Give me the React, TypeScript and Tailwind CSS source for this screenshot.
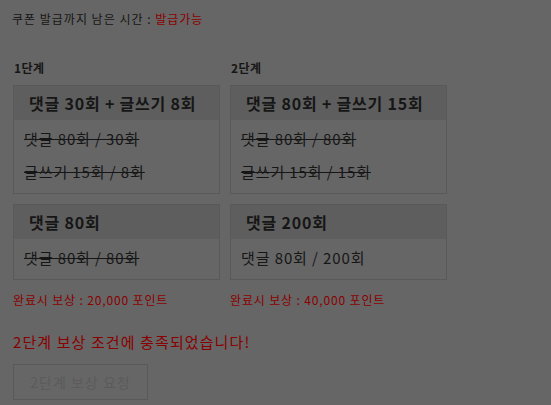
const font = { fontFamily: '"Noto Sans CJK KR", "Noto Sans", sans-serif' };

type Stage = {
  title: string;
  lines: { text: string; done: boolean }[];
};

const stage1: Stage[] = [
  {
    title: '댓글 30회 + 글쓰기 8회',
    lines: [
      { text: '댓글 80회 / 30회', done: true },
      { text: '글쓰기 15회 / 8회', done: true },
    ],
  },
  {
    title: '댓글 80회',
    lines: [{ text: '댓글 80회 / 80회', done: true }],
  },
];

const stage2: Stage[] = [
  {
    title: '댓글 80회 + 글쓰기 15회',
    lines: [
      { text: '댓글 80회 / 80회', done: true },
      { text: '글쓰기 15회 / 15회', done: true },
    ],
  },
  {
    title: '댓글 200회',
    lines: [{ text: '댓글 80회 / 200회', done: false }],
  },
];

function MissionBox({ stage }: { stage: Stage }) {
  return (
    <div className="border border-[#595959]">
      <div className="h-[34px] flex items-center pl-[15px] bg-[#5e5e5e] text-[16px] font-semibold text-[#161616] tracking-[0.8px] whitespace-nowrap">
        {stage.title}
      </div>
      <div className="pl-[10px] pt-[3px] pb-[4px] flex flex-col">
        {stage.lines.map((l) => (
          <div
            key={l.text}
            className={`h-[33px] flex items-center text-[15px] text-[#161616] tracking-[0.9px] ${l.done ? 'line-through' : ''}`}
          >
            {l.text}
          </div>
        ))}
      </div>
    </div>
  );
}

function Column({
  label,
  stages,
  reward,
  width,
}: {
  label: string;
  stages: Stage[];
  reward: string;
  width: string;
}) {
  return (
    <div className={`${width} flex flex-col`}>
      <div className="text-[12px] font-bold text-[#161616] h-[16px] leading-[16px] pl-[1px] tracking-[0.5px]">{label}</div>
      <div className="mt-[9px] flex flex-col gap-[10px]">
        {stages.map((s) => (
          <MissionBox key={s.title} stage={s} />
        ))}
      </div>
      <div className="mt-[11px] text-[12px] text-[#8a0000] leading-[18px] tracking-[0.85px] whitespace-nowrap">
        완료시 보상 : {reward} 포인트
      </div>
    </div>
  );
}

export default function App() {
  return (
    <div className="w-[551px] h-[405px] bg-[#666666] overflow-hidden" style={font}>
      <div className="pl-[12px] pt-[10px]">
        <div className="text-[12px] text-[#161616] leading-[18px] tracking-[1px]">
          쿠폰 발급까지 남은 시간 : <span className="text-[#8a0000]">발급가능</span>
        </div>
        <div className="mt-[32px] flex gap-[10px] pl-[1px]">
          <Column label="1단계" stages={stage1} reward="20,000" width="w-[207px]" />
          <Column label="2단계" stages={stage2} reward="40,000" width="w-[217px]" />
        </div>
        <div className="mt-[22px] pl-[1px] text-[15px] text-[#8a0000] leading-[22px] tracking-[1.1px]">
          2단계 보상 조건에 충족되었습니다!
        </div>
        <button className="mt-[11px] ml-[1px] w-[135px] h-[36px] border border-[#595959] text-[14px] text-[#5b5b5b] tracking-[1px]">
          2단계 보상 요청
        </button>
      </div>
    </div>
  );
}
